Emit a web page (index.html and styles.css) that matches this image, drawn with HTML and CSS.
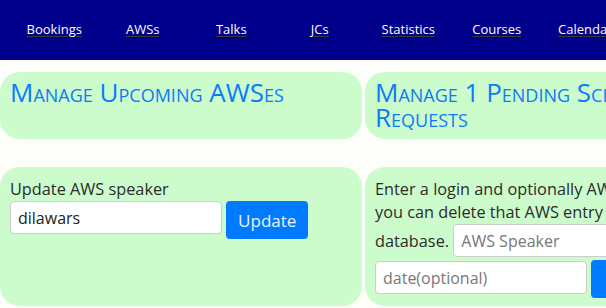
FILE: index.html
```html
<!DOCTYPE html>
<html>
<head>
<meta charset="utf-8">
<link rel="stylesheet" href="styles.css">
</head>
<body>
<nav class="topnav">
  <a class="nav-link" href="#">Bookings</a>
  <a class="nav-link" href="#">AWSs</a>
  <a class="nav-link" href="#">Talks</a>
  <a class="nav-link" href="#">JCs</a>
  <a class="nav-link" href="#">Statistics</a>
  <a class="nav-link" href="#">Courses</a>
  <a class="nav-link" href="#">Calendar</a>
  <a class="nav-link" href="#">Logout</a>
</nav>
<main class="grid">
  <section class="card">
    <h2 class="card-title">Manage Upcoming AWSes</h2>
  </section>
  <section class="card">
    <h2 class="card-title">Manage 1 Pending Scheduling Requests</h2>
  </section>
  <section class="card card-body">
    <form class="form">Update AWS speaker<br><input class="field" type="text" value="dilawars"> <button class="btn" type="button">Update</button></form>
  </section>
  <section class="card card-body">
    <form class="form">Enter a login and optionally AWS date and you can delete that AWS entry from my database. <input class="field" type="text" placeholder="AWS Speaker"> <input class="field field-date" type="text" placeholder="date(optional)"> <button class="btn btn-delete" type="button">Delete</button></form>
  </section>
</main>
</body>
</html>
```
FILE: styles.css
```css
html, body {
  margin: 0;
  padding: 0;
  overflow: hidden;
}
body {
  background: #fdfef9;
  font-family: "Open Sans", "Noto Sans", sans-serif;
  color: #2b2b2b;
  width: 606px;
  height: 308px;
}
.topnav {
  display: flex;
  align-items: center;
  height: 60px;
  background: #00008b;
  padding-left: 10px;
  padding-bottom: 2px;
  box-sizing: border-box;
  overflow: hidden;
}
.nav-link {
  flex: 0 0 88.5px;
  text-align: center;
  color: #ffffff;
  font-size: 13px;
  text-decoration: underline;
  text-decoration-color: #3a3a3a;
  text-underline-offset: 2px;
}
.grid {
  display: grid;
  grid-template-columns: 362px 362px;
  column-gap: 3px;
  row-gap: 28px;
  margin-top: 12px;
  width: 727px;
}
.card {
  background: #ccfccc;
  border-radius: 20px;
  padding: 8px 11px 9px 10px;
}
.card-title {
  margin: 0;
  font-size: 26px;
  font-weight: normal;
  line-height: 25px;
  font-variant: small-caps;
  color: #0a7bfa;
}
.card-body {
  padding: 11px 11px 10px 10px;
  height: 118px;
}
.form {
  margin: 0;
  font-size: 16.3px;
  line-height: 23px;
}
.field {
  box-sizing: border-box;
  width: 212px;
  height: 33px;
  padding: 4px 7px;
  border: 1px solid #cccccc;
  border-radius: 4px;
  font-family: inherit;
  font-size: 16px;
  color: #222;
  background: #fff;
  vertical-align: baseline;
}
.field-date {
  margin-top: 4px;
}
.field::placeholder {
  color: #777;
}
.btn {
  box-sizing: border-box;
  width: 82px;
  height: 38px;
  border: none;
  border-radius: 4px;
  background: #007bff;
  color: #eef4ff;
  font-family: inherit;
  font-size: 17px;
  vertical-align: top;
}
.btn-delete {
  margin-top: 3px;
}
```
